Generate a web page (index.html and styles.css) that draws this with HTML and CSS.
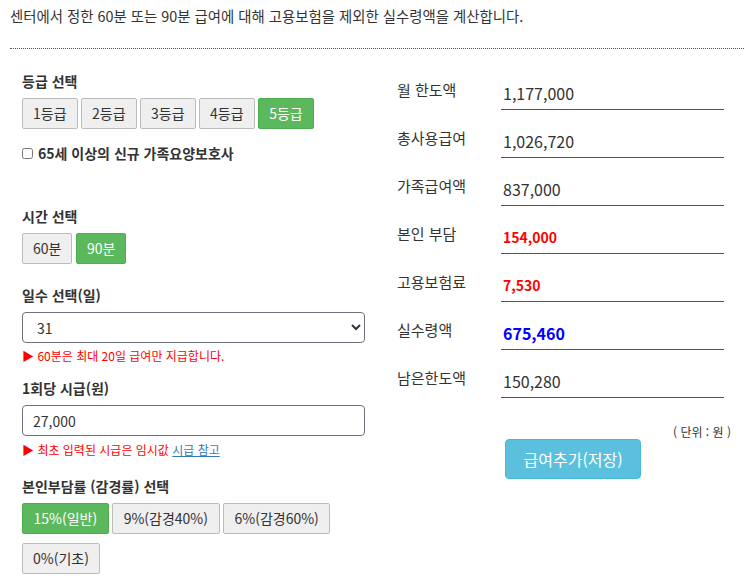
FILE: index.html
```html
<!DOCTYPE html>
<html lang="ko">
<head>
<meta charset="utf-8">
<title>실수령액 계산</title>
<link rel="stylesheet" href="styles.css">
</head>
<body>
<div class="page">
  <p class="intro">센터에서 정한 60분 또는 90분 급여에 대해 고용보험을 제외한 실수령액을 계산합니다.</p>
  <div class="divider"></div>
  <div class="main">
    <div class="left">
      <div class="label l-grade">등급 선택</div>
      <div class="btn-group">
        <button class="btn">1등급</button>
        <button class="btn">2등급</button>
        <button class="btn">3등급</button>
        <button class="btn">4등급</button>
        <button class="btn active">5등급</button>
      </div>
      <label class="check"><input type="checkbox" class="check-box">65세 이상의 신규 가족요양보호사</label>

      <div class="label l-time">시간 선택</div>
      <div class="btn-group">
        <button class="btn">60분</button>
        <button class="btn active">90분</button>
      </div>

      <div class="label l-days">일수 선택(일)</div>
      <select class="field select">
        <option>31</option>
      </select>
      <div class="note note-days"><span class="tri">▶</span> 60분은 최대 20일 급여만 지급합니다.</div>

      <div class="label l-wage">1회당 시급(원)</div>
      <input class="field input" type="text" value="27,000">
      <div class="note note-wage"><span class="tri">▶</span> 최초 입력된 시급은 임시값 <a class="link" href="#">시급 참고</a></div>

      <div class="label l-rate">본인부담률 (감경률) 선택</div>
      <div class="btn-group">
        <button class="btn wide active">15%(일반)</button>
        <button class="btn wide">9%(감경40%)</button>
        <button class="btn wide">6%(감경60%)</button>
        <button class="btn">0%(기초)</button>
      </div>
    </div>

    <div class="right">
      <div class="row"><div class="r-label">월 한도액</div><div class="r-value">1,177,000</div></div>
      <div class="row"><div class="r-label">총사용급여</div><div class="r-value">1,026,720</div></div>
      <div class="row"><div class="r-label">가족급여액</div><div class="r-value">837,000</div></div>
      <div class="row"><div class="r-label">본인 부담</div><div class="r-value strong red">154,000</div></div>
      <div class="row"><div class="r-label">고용보험료</div><div class="r-value strong red">7,530</div></div>
      <div class="row"><div class="r-label">실수령액</div><div class="r-value strong blue">675,460</div></div>
      <div class="row"><div class="r-label">남은한도액</div><div class="r-value">150,280</div></div>
      <div class="unit">( 단위 : 원 )</div>
      <button class="save">급여추가(저장)</button>
    </div>
  </div>
</div>
</body>
</html>
```

FILE: styles.css
```css
* { box-sizing: border-box; }

body {
  margin: 0;
  background: #fff;
  color: #333;
  font-family: "Noto Sans CJK KR", "Noto Sans", sans-serif;
  font-size: 14px;
}

.page {
  padding: 6px 8px 0 10px;
}

.intro {
  margin: 0;
  font-size: 14.4px;
  line-height: 20px;
}

.divider {
  margin-top: 22px;
  border-top: 1px dotted #555;
}

.main {
  display: flex;
  padding: 21px 0 0 12px;
}

.left {
  width: 343px;
  flex: none;
}

.label {
  font-weight: 700;
  font-size: 14px;
  line-height: 20px;
  margin-bottom: 7px;
}

.l-grade { margin-top: 1px; }
.l-time { margin-top: 43px; }
.l-days { margin-top: 21px; }
.l-wage { margin-top: 14px; }
.l-rate { margin-top: 18px; }

.btn-group {
  display: flex;
  flex-wrap: wrap;
  gap: 9px 3.5px;
}

.btn {
  font-family: inherit;
  font-size: 14px;
  line-height: 19px;
  color: #333;
  background: #efefef;
  border: 1px solid #bcbcbc;
  border-radius: 2px;
  padding: 5px 10px;
  margin: 0;
}

.btn.wide {
  padding: 5px 10.5px;
}

.btn.active {
  background: #5cb85c;
  border-color: #4cae4c;
  color: #fff;
}

.check {
  display: flex;
  align-items: center;
  margin-top: 14px;
  font-weight: 700;
  line-height: 20px;
}

.check-box {
  width: 11px;
  height: 11px;
  margin: 0 5px 0 0;
}

.field {
  display: block;
  width: 343px;
  height: 31px;
  font-family: inherit;
  font-size: 14px;
  color: #333;
  border: 1px solid #6c737d;
  border-radius: 4px;
  background: #fff;
  margin: 0;
}

.select {
  padding: 0 8px 0 10px;
}

.input {
  padding: 0 10px;
}

.note {
  font-size: 12px;
  line-height: 17px;
  color: #f00;
}

.note-days { margin-top: 4px; }
.note-wage { margin-top: 5px; }

.link {
  color: #337ab7;
  text-decoration: underline;
}

.right {
  margin-left: 32px;
  width: 334px;
  flex: none;
}

.row {
  display: flex;
  align-items: flex-start;
  margin-bottom: 8px;
}

.r-label {
  width: 104px;
  flex: none;
  font-size: 15px;
  line-height: 22px;
  padding-top: 9px;
}

.r-value {
  width: 223px;
  height: 40px;
  padding: 11px 0 4px 2px;
  font-size: 16px;
  line-height: 24px;
  border-bottom: 1px solid #555;
}

.r-value.strong { font-weight: 700; }
.r-value.red { color: #f00; font-size: 14px; }
.r-value.blue { color: #00f; }

.unit {
  margin-top: 26px;
  font-size: 12px;
  line-height: 15px;
  text-align: right;
}

.save {
  display: block;
  margin-left: 108px;
  height: 40px;
  padding: 0 17.5px;
  font-family: inherit;
  font-size: 16px;
  color: #fff;
  background: #5bc0de;
  border: 1px solid #46b8da;
  border-radius: 4px;
}
```
